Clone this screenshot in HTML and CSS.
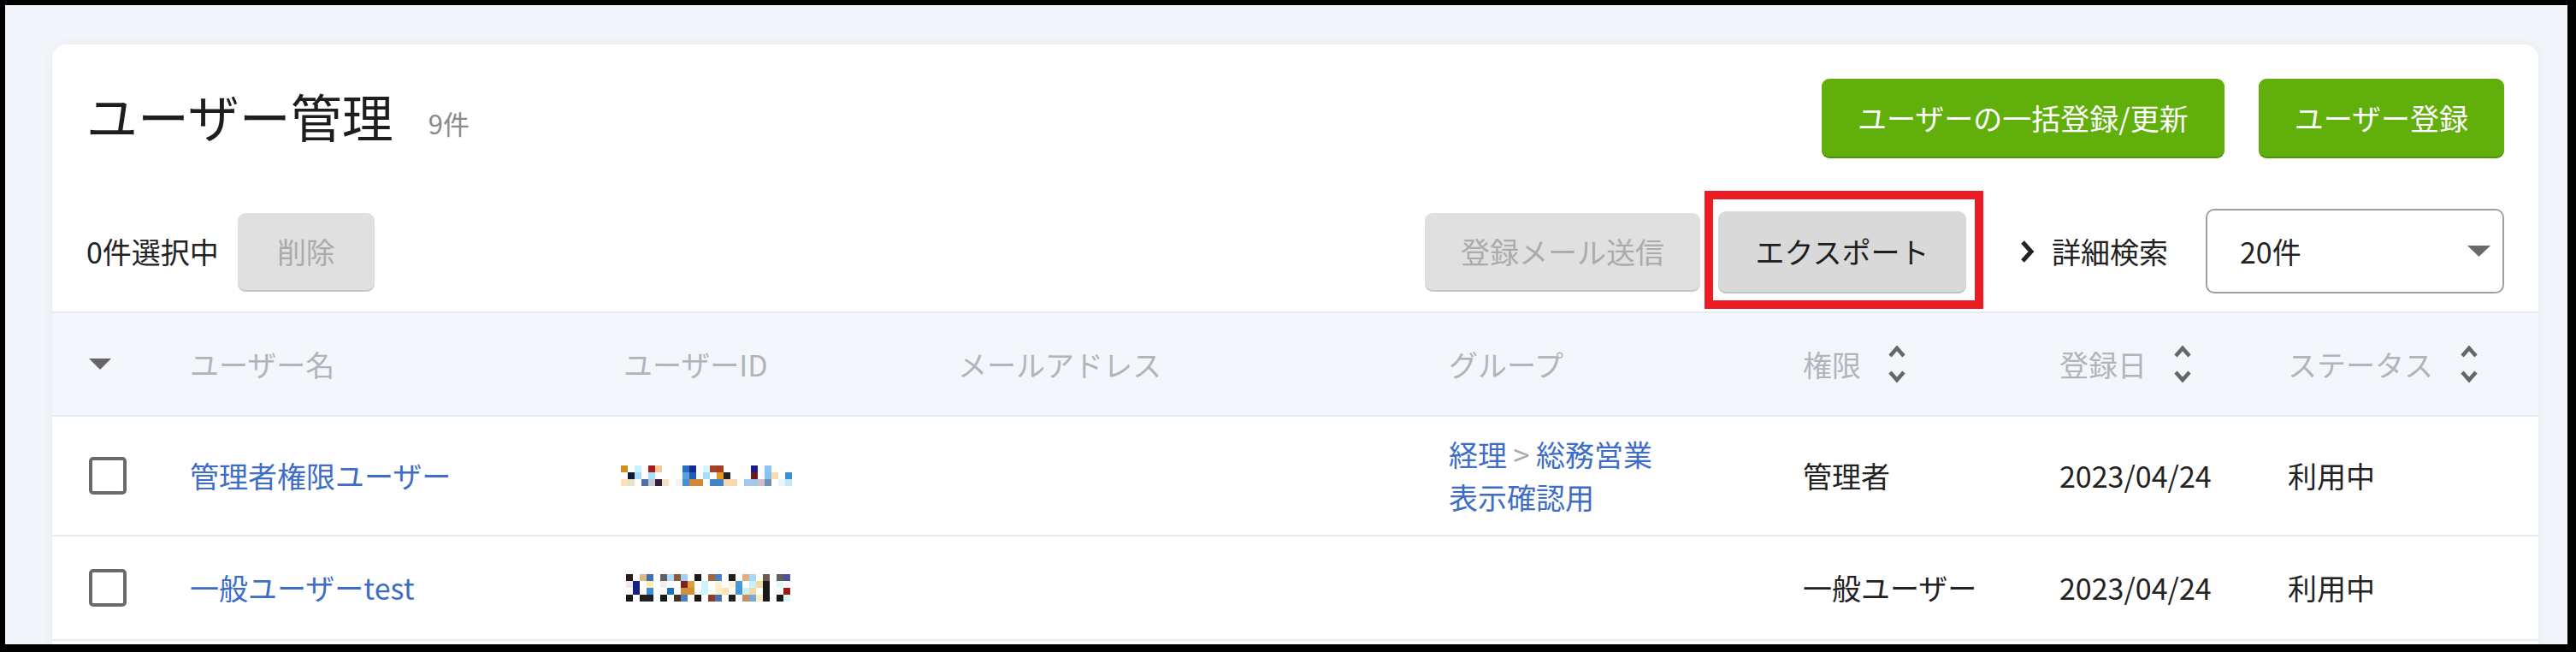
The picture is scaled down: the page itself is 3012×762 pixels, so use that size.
FILE: index.html
```html
<!DOCTYPE html>
<html lang="ja">
<head>
<meta charset="utf-8">
<title>ユーザー管理</title>
<link rel="stylesheet" href="styles.css">
</head>
<body>
<div class="frame">
  <div class="card">
    <div class="head">
      <div class="title-row">
        <div class="title">
          <h1 class="title-text">ユーザー管理</h1>
          <span class="count">9件</span>
        </div>
        <div class="actions">
          <button class="btn btn-green">ユーザーの一括登録/更新</button>
          <button class="btn btn-green">ユーザー登録</button>
        </div>
      </div>
      <div class="toolbar">
        <div class="tb-left">
          <span class="selected">0件選択中</span>
          <button class="btn btn-disabled btn-del">削除</button>
        </div>
        <div class="tb-right">
          <button class="btn btn-disabled btn-mail">登録メール送信</button>
          <div class="export-wrap">
            <button class="btn btn-export">エクスポート</button>
            <span class="annot"></span>
          </div>
          <a class="adv">
            <svg class="adv-icon" width="18" height="28" viewBox="0 0 18 28"><polyline points="4,3 14,14 4,25" fill="none" stroke="#222" stroke-width="5" stroke-linejoin="miter"/></svg>
            <span>詳細検索</span>
          </a>
          <div class="select">
            <span>20件</span>
            <svg class="select-arrow" width="27" height="13" viewBox="0 0 27 13"><polygon points="0,0 27,0 13.5,13" fill="#6a6a6a"/></svg>
          </div>
        </div>
      </div>
    </div>

    <div class="table">
      <div class="tr th">
        <div class="cell c-check">
          <svg width="26" height="13" viewBox="0 0 26 13"><polygon points="0,0 26,0 13,13" fill="#666"/></svg>
        </div>
        <div class="cell">ユーザー名</div>
        <div class="cell">ユーザーID</div>
        <div class="cell">メールアドレス</div>
        <div class="cell">グループ</div>
        <div class="cell">権限<svg class="sort" width="22" height="46" viewBox="0 0 22 46"><polyline points="3,13 11,4 19,13" fill="none" stroke="#666" stroke-width="4.5"/><polyline points="3,32 11,41 19,32" fill="none" stroke="#666" stroke-width="4.5"/></svg></div>
        <div class="cell">登録日<svg class="sort" width="22" height="46" viewBox="0 0 22 46"><polyline points="3,13 11,4 19,13" fill="none" stroke="#666" stroke-width="4.5"/><polyline points="3,32 11,41 19,32" fill="none" stroke="#666" stroke-width="4.5"/></svg></div>
        <div class="cell">ステータス<svg class="sort" width="22" height="46" viewBox="0 0 22 46"><polyline points="3,13 11,4 19,13" fill="none" stroke="#666" stroke-width="4.5"/><polyline points="3,32 11,41 19,32" fill="none" stroke="#666" stroke-width="4.5"/></svg></div>
      </div>

      <div class="tr">
        <div class="cell c-check"><span class="checkbox"></span></div>
        <div class="cell"><a class="link">管理者権限ユーザー</a></div>
        <div class="cell">
          <svg class="mosaic mosaic-a" width="200" height="24" viewBox="0 0 200 24">
            <rect x="0" y="0" width="8" height="8" fill="#d0901c"/><rect x="16" y="0" width="8" height="8" fill="#c8f0ff"/><rect x="32" y="0" width="8" height="8" fill="#a31c1c"/><rect x="40" y="0" width="8" height="8" fill="#f8c898"/><rect x="72" y="0" width="8" height="8" fill="#2a70c0"/><rect x="80" y="0" width="8" height="8" fill="#1a2a90"/><rect x="96" y="0" width="8" height="8" fill="#d4f6ff"/><rect x="104" y="0" width="8" height="8" fill="#a8402a"/><rect x="112" y="0" width="8" height="8" fill="#a83c24"/><rect x="152" y="0" width="8" height="8" fill="#1a1e88"/><rect x="168" y="0" width="8" height="8" fill="#8cc4f4"/>
            <rect x="8" y="8" width="8" height="8" fill="#141830"/><rect x="16" y="8" width="8" height="8" fill="#a8dcf8"/><rect x="32" y="8" width="8" height="8" fill="#a8e0f8"/><rect x="72" y="8" width="8" height="8" fill="#5aa0dc"/><rect x="80" y="8" width="8" height="8" fill="#1e5eb4"/><rect x="96" y="8" width="8" height="8" fill="#a8dcf8"/><rect x="112" y="8" width="8" height="8" fill="#e09a22"/><rect x="120" y="8" width="8" height="8" fill="#2a2222"/><rect x="152" y="8" width="8" height="8" fill="#6c1a1a"/><rect x="168" y="8" width="8" height="8" fill="#88c0f0"/><rect x="176" y="8" width="8" height="8" fill="#f8dcac"/><rect x="192" y="8" width="8" height="8" fill="#3a90d0"/>
            <rect x="0" y="16" width="8" height="8" fill="#fce0b8"/><rect x="8" y="16" width="8" height="8" fill="#e8e2c8"/><rect x="24" y="16" width="8" height="8" fill="#4a72a8"/><rect x="32" y="16" width="8" height="8" fill="#c4c8d0"/><rect x="40" y="16" width="8" height="8" fill="#30203e"/><rect x="48" y="16" width="8" height="8" fill="#f2e2c2"/><rect x="64" y="16" width="8" height="8" fill="#f2f2f2"/><rect x="72" y="16" width="8" height="8" fill="#4290d8"/><rect x="80" y="16" width="16" height="8" fill="#d08838"/><rect x="104" y="16" width="16" height="8" fill="#4282c8"/><rect x="120" y="16" width="16" height="8" fill="#f8d8b0"/><rect x="144" y="16" width="16" height="8" fill="#a2c8f0"/><rect x="160" y="16" width="8" height="8" fill="#d2c0c8"/><rect x="168" y="16" width="8" height="8" fill="#7090b8"/><rect x="184" y="16" width="8" height="8" fill="#eaf4fc"/><rect x="192" y="16" width="8" height="8" fill="#c2e8f8"/>
          </svg>
        </div>
        <div class="cell"></div>
        <div class="cell group">
          <div><a class="link">経理</a><span class="sep"> &gt; </span><a class="link">総務営業</a></div>
          <div><a class="link">表示確認用</a></div>
        </div>
        <div class="cell">管理者</div>
        <div class="cell">2023/04/24</div>
        <div class="cell">利用中</div>
      </div>

      <div class="tr">
        <div class="cell c-check"><span class="checkbox"></span></div>
        <div class="cell"><a class="link">一般ユーザーtest</a></div>
        <div class="cell">
          <svg class="mosaic mosaic-b" width="192" height="32" viewBox="0 0 192 32">
            <rect x="0" y="0" width="8" height="8" fill="#2a1a1a"/><rect x="16" y="0" width="8" height="8" fill="#e0b888"/><rect x="24" y="0" width="8" height="8" fill="#4070b0"/><rect x="40" y="0" width="8" height="8" fill="#606060"/><rect x="48" y="0" width="8" height="8" fill="#b0dcf8"/><rect x="56" y="0" width="8" height="8" fill="#8a5a3a"/><rect x="64" y="0" width="8" height="8" fill="#a0d0f8"/><rect x="80" y="0" width="8" height="8" fill="#1a1a1a"/><rect x="96" y="0" width="8" height="8" fill="#a06838"/><rect x="104" y="0" width="8" height="8" fill="#4a80c0"/><rect x="120" y="0" width="8" height="8" fill="#202020"/><rect x="136" y="0" width="8" height="8" fill="#e0b080"/><rect x="144" y="0" width="8" height="8" fill="#a8d8f8"/><rect x="160" y="0" width="8" height="8" fill="#6a5a50"/><rect x="176" y="0" width="8" height="8" fill="#606060"/><rect x="184" y="0" width="8" height="8" fill="#5050a0"/>
            <rect x="0" y="8" width="8" height="8" fill="#f0e8f0"/><rect x="8" y="8" width="8" height="8" fill="#1a2080"/><rect x="24" y="8" width="8" height="8" fill="#fcecb0"/><rect x="40" y="8" width="8" height="8" fill="#f0f0f0"/><rect x="64" y="8" width="8" height="8" fill="#802020"/><rect x="72" y="8" width="8" height="8" fill="#d8a040"/><rect x="88" y="8" width="8" height="8" fill="#c8f4ff"/><rect x="104" y="8" width="8" height="8" fill="#fff0d0"/><rect x="120" y="8" width="8" height="8" fill="#fff4d8"/><rect x="128" y="8" width="8" height="8" fill="#4898d8"/><rect x="144" y="8" width="8" height="8" fill="#c8f0ff"/><rect x="152" y="8" width="8" height="8" fill="#f8d8a0"/><rect x="160" y="8" width="8" height="8" fill="#1a1a1a"/><rect x="176" y="8" width="8" height="8" fill="#e0f8f8"/>
            <rect x="8" y="16" width="8" height="8" fill="#1a2080"/><rect x="24" y="16" width="8" height="8" fill="#3890d8"/><rect x="48" y="16" width="8" height="8" fill="#2070c0"/><rect x="64" y="16" width="8" height="8" fill="#d09040"/><rect x="72" y="16" width="8" height="8" fill="#d09030"/><rect x="88" y="16" width="8" height="8" fill="#c8f4ff"/><rect x="104" y="16" width="8" height="8" fill="#fff0c8"/><rect x="112" y="16" width="8" height="8" fill="#fce0b0"/><rect x="128" y="16" width="8" height="8" fill="#4898d8"/><rect x="136" y="16" width="8" height="8" fill="#c8f0ff"/><rect x="144" y="16" width="8" height="8" fill="#f8d8a0"/><rect x="160" y="16" width="8" height="8" fill="#1a1a1a"/><rect x="184" y="16" width="8" height="8" fill="#a01818"/>
            <rect x="0" y="24" width="8" height="8" fill="#1a1a1a"/><rect x="16" y="24" width="16" height="8" fill="#202020"/><rect x="40" y="24" width="8" height="8" fill="#1a1a1a"/><rect x="56" y="24" width="8" height="8" fill="#4a3020"/><rect x="64" y="24" width="8" height="8" fill="#4a80c0"/><rect x="80" y="24" width="8" height="8" fill="#1a1a1a"/><rect x="96" y="24" width="8" height="8" fill="#8a4020"/><rect x="104" y="24" width="8" height="8" fill="#4a70b0"/><rect x="120" y="24" width="8" height="8" fill="#202020"/><rect x="136" y="24" width="8" height="8" fill="#c89060"/><rect x="144" y="24" width="8" height="8" fill="#78a8d8"/><rect x="152" y="24" width="8" height="8" fill="#fcecc0"/><rect x="160" y="24" width="8" height="8" fill="#1a1a1a"/><rect x="176" y="24" width="8" height="8" fill="#1a1a1a"/><rect x="184" y="24" width="8" height="8" fill="#d8f8f8"/>
          </svg>
        </div>
        <div class="cell"></div>
        <div class="cell"></div>
        <div class="cell">一般ユーザー</div>
        <div class="cell">2023/04/24</div>
        <div class="cell">利用中</div>
      </div>

      <div class="tr">
        <div class="cell c-check"><span class="checkbox"></span></div>
        <div class="cell"><a class="link">&nbsp;</a></div>
        <div class="cell"></div>
        <div class="cell"></div>
        <div class="cell"></div>
        <div class="cell"></div>
        <div class="cell"></div>
        <div class="cell"></div>
      </div>
    </div>
  </div>
</div>
</body>
</html>
```

FILE: styles.css
```css
* { box-sizing: border-box; }

html, body {
  margin: 0;
  padding: 0;
  background: #000;
}

body {
  font-family: "Noto Sans CJK JP", "Noto Sans", sans-serif;
  font-size: 34px;
  color: #222;
}

.frame {
  width: 3012px;
  height: 762px;
  overflow: hidden;
  border-style: solid;
  border-color: #000;
  border-width: 6px 10px 9px 6px;
  background: #f2f5f9;
  padding: 46px 34px 0 55px;
}

.card {
  background: #fff;
  border-radius: 16px 16px 0 0;
  padding-top: 40px;
  min-height: 900px;
  box-shadow: 0 0 14px rgba(40, 60, 90, 0.05);
}

.head {
  padding: 0 40px;
}

.title-row {
  height: 91px;
  display: flex;
  align-items: center;
  justify-content: space-between;
}

.title {
  display: flex;
  align-items: baseline;
}

.title-text {
  margin: 0;
  font-size: 60px;
  font-weight: 400;
  line-height: 1;
  color: #1e1e1e;
}

.count {
  margin-left: 41px;
  font-size: 31px;
  color: #8a8a8a;
  position: relative;
  top: -4px;
}

.actions {
  display: flex;
  gap: 40px;
}

.btn {
  font-family: inherit;
  font-size: 34px;
  border: none;
  border-radius: 9px;
  height: 90px;
  padding: 0 42px;
  line-height: 1;
  cursor: pointer;
}

.btn-green {
  height: 91px;
  background: #60af0b;
  color: #fff;
  box-shadow: 0 2px 0 #4f9408;
}

.toolbar {
  margin-top: 61px;
  margin-bottom: 21px;
  height: 99px;
  display: flex;
  align-items: center;
  justify-content: space-between;
}

.tb-left {
  display: flex;
  align-items: center;
  gap: 22px;
}

.selected {
  color: #222;
}

.btn-disabled {
  background: #e0e0e0;
  color: #ababab;
  box-shadow: 0 2px 0 #c9c9c9;
}

.btn-del {
  width: 160px;
  padding: 0;
}

.tb-right {
  display: flex;
  align-items: center;
}

.btn-mail {
  width: 322px;
  padding: 0;
}

.export-wrap {
  position: relative;
  margin-left: 21px;
}

.btn-export {
  width: 290px;
  height: 94px;
  padding: 0;
  background: #d9d9d9;
  color: #1e1e1e;
  box-shadow: 0 2px 0 #c2c2c2;
  display: block;
}

.annot {
  position: absolute;
  left: -16px;
  top: -24px;
  right: -20px;
  bottom: -20px;
  border: 10px solid #ec1c24;
  pointer-events: none;
}

.adv {
  display: flex;
  align-items: center;
  margin-left: 62px;
  color: #222;
  cursor: pointer;
}

.adv-icon {
  margin-right: 20px;
  display: block;
}

.select {
  margin-left: 44px;
  width: 349px;
  height: 99px;
  border: 2px solid #a0a0a0;
  border-radius: 10px;
  display: flex;
  align-items: center;
  justify-content: space-between;
  padding: 0 14px 0 38px;
  background: #fff;
}

.select-arrow {
  display: block;
}

.table {
  display: flex;
  flex-direction: column;
}

.tr {
  display: grid;
  grid-template-columns: 161px 507px 391px 574px 414px 300px 267px 1fr;
  align-items: center;
  min-height: 122px;
  padding: 19px 0;
  border-bottom: 2px solid #e5ecf6;
}

.th {
  background: #f3f6fb;
  border-top: 2px solid #e5ecf6;
  min-height: 123px;
  color: #b1b5bb;
}

.cell {
  display: flex;
  align-items: center;
  line-height: 50px;
}

.c-check {
  padding-left: 43px;
}

.group {
  flex-direction: column;
  align-items: flex-start;
}

.sort {
  margin-left: 31px;
  display: block;
}

.checkbox {
  display: block;
  width: 44px;
  height: 44px;
  border: 4px solid #6a6a6a;
  border-radius: 5px;
}

.link {
  color: #3d6dc6;
  cursor: pointer;
}

.sep {
  color: #a8a8a8;
  white-space: pre;
}

.mosaic {
  display: block;
}

.mosaic-a {
  margin-left: -3px;
}

.mosaic-b {
  margin-left: 3px;
}
```
